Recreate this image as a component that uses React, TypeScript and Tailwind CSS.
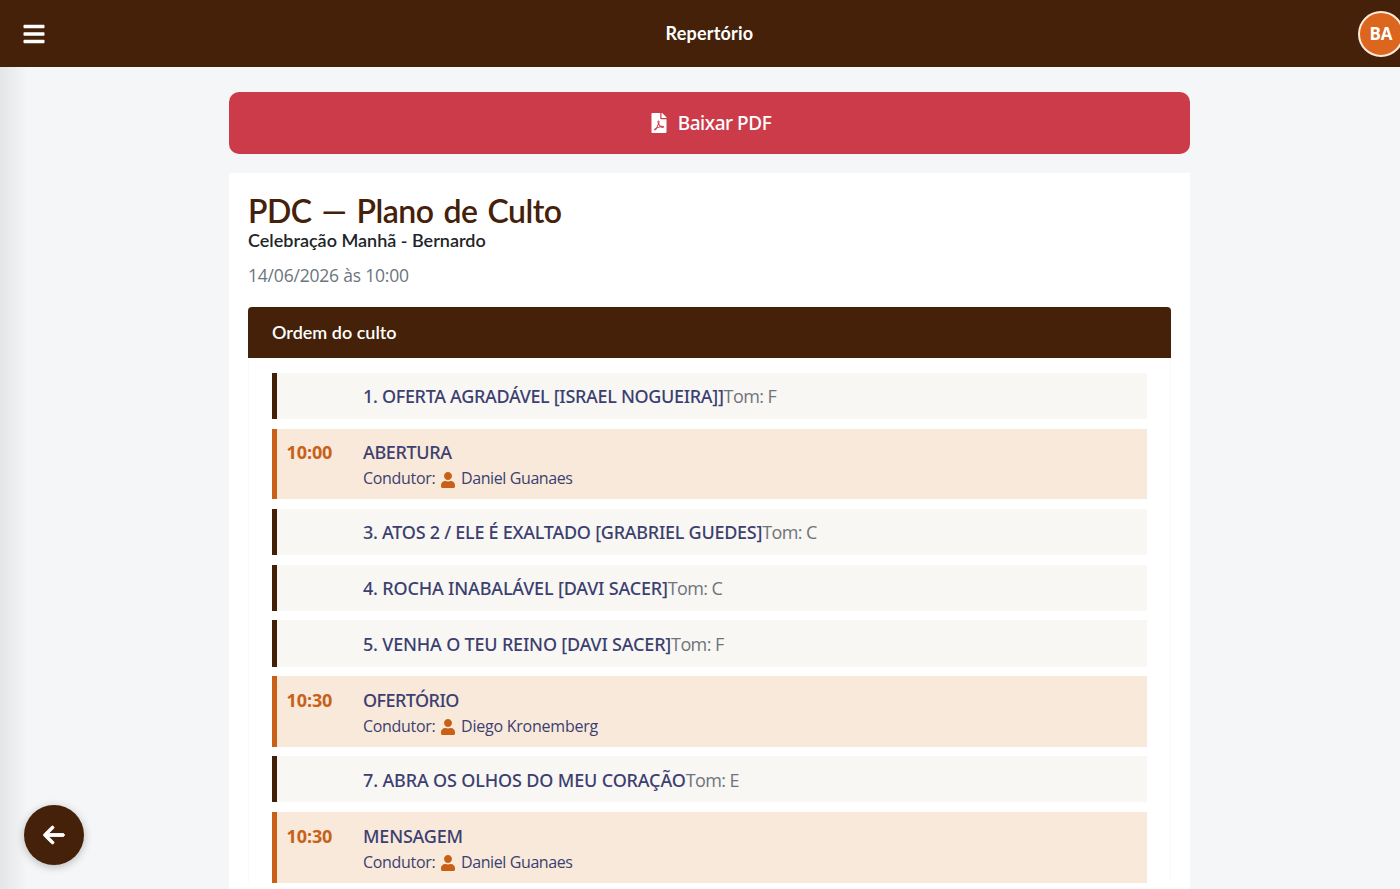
import cn from 'clsx';
import { FaBars, FaFilePdf, FaUser } from 'react-icons/fa';
import { FaArrowLeft } from 'react-icons/fa6';

type Item = {
  title: string;
  titleClass: string;
  time?: string;
  tom?: string;
  condutor?: string;
  condutorClass?: string;
};

const items: Item[] = [
  { title: '1. OFERTA AGRADÁVEL [ISRAEL NOGUEIRA]]', titleClass: 'tracking-[-0.32px]', tom: 'F' },
  { title: 'ABERTURA', titleClass: 'tracking-[-0.35px]', time: '10:00', condutor: 'Daniel Guanaes', condutorClass: 'tracking-[-0.4px]' },
  { title: '3. ATOS 2 / ELE É EXALTADO [GRABRIEL GUEDES]', titleClass: 'tracking-[-0.26px]', tom: 'C' },
  { title: '4. ROCHA INABALÁVEL [DAVI SACER]', titleClass: 'tracking-[-0.18px]', tom: 'C' },
  { title: '5. VENHA O TEU REINO [DAVI SACER]', titleClass: 'tracking-[-0.19px]', tom: 'F' },
  { title: 'OFERTÓRIO', titleClass: 'tracking-[-0.55px]', time: '10:30', condutor: 'Diego Kronemberg', condutorClass: 'tracking-[-0.23px]' },
  { title: '7. ABRA OS OLHOS DO MEU CORAÇÃO', titleClass: 'tracking-[-0.15px]', tom: 'E' },
  { title: 'MENSAGEM', titleClass: 'tracking-[-0.2px]', time: '10:30', condutor: 'Daniel Guanaes', condutorClass: 'tracking-[-0.4px]' },
];

function Row({ item }: { item: Item }) {
  return (
    <li
      className={cn(
        'flex w-full shrink-0 border-l-[5px] pl-[9.5px] whitespace-nowrap',
        item.time ? 'h-[70.6px] border-[#c86018] bg-[#f8e9db]' : 'h-[46.2px] border-[#431f07] bg-[#f8f7f4]'
      )}
    >
      <span className="w-[76.5px] shrink-0 pt-[9.5px] text-[18px] leading-[28px] font-bold tracking-[-0.1px] text-[#c86018]">
        {item.time}
      </span>
      <div className="pt-[9.5px] text-[#3c3f70]">
        <p className="flex text-[18px] leading-[28px]">
          <span className={cn("font-['Noto_Sans',sans-serif] font-medium", item.titleClass)}>{item.title}</span>
          {item.tom && <span className="tracking-[-0.6px] text-[#6f747a]">Tom: {item.tom}</span>}
        </p>
        {item.condutor && (
          <p className="flex items-center text-[16px] leading-[24px]">
            <span className="w-[77px] tracking-[-0.3px]">Condutor:</span>
            <FaUser className="mt-[3px] size-[16px] text-[#c86018]" />
            <span className={cn('ml-[5px]', item.condutorClass)}>{item.condutor}</span>
          </p>
        )}
      </div>
    </li>
  );
}

export default function App() {
  return (
    <div className="relative flex h-[889px] w-[1400px] flex-col overflow-hidden bg-[#f4f6f8] font-['Open_Sans',sans-serif]">
      <header className="z-10 flex h-[67px] shrink-0 items-center bg-[#442108] pl-[22px] text-white">
        <FaBars className="size-[24px]" />
        <h1 className="ml-[619.5px] font-['Lato',sans-serif] text-[18px] font-bold tracking-[0.2px]">Repertório</h1>
        <div className="absolute left-[1358px] flex size-[46px] items-center justify-center rounded-full border-2 border-[#fdebdc] bg-[#dc661d] text-[17px] font-bold">
          BA
        </div>
      </header>

      {/* sombra do menu lateral fechado */}
      <div className="absolute top-[67px] bottom-0 left-0 w-[28px] bg-linear-to-r from-black/7 to-transparent" />

      <main className="mt-[24.5px] ml-[228.5px] flex w-[961.5px] flex-col">
        <button className="flex h-[62px] shrink-0 items-center justify-center rounded-[10px] bg-[#cc3b49] text-[19px] font-medium text-white">
          <FaFilePdf className="mr-[8.5px] ml-[2px] size-[20px]" />
          <span className="pt-[2px] font-['Noto_Sans',sans-serif] tracking-[-0.45px]">Baixar PDF</span>
        </button>

        <section className="mt-[19.5px] flex h-[760px] flex-col bg-white px-[19.5px] pt-[19px]">
          <h2 className="font-['Lato',sans-serif] text-[32px] leading-[38px] font-semibold tracking-[-0.5px] text-[#442108] [word-spacing:2.5px]">
            PDC — Plano de Culto
          </h2>
          <h3 className="-mt-px font-['Lato',sans-serif] text-[18px] leading-[22px] font-semibold text-[#212529]">
            Celebração Manhã - Bernardo
          </h3>
          <p className="mt-[10px] text-[17.5px] leading-[28px] tracking-[-0.2px] text-[#6c757d]">14/06/2026 às 10:00</p>

          <div className="mt-[18.4px] rounded-t-[4px] border-x border-[#fafafa]">
            <div className="-mx-px flex h-[51px] items-center rounded-t-[4px] bg-[#442108] pl-6 font-['Lato',sans-serif] text-[18px] font-semibold text-white">
              Ordem do culto
            </div>
            <ul className="flex flex-col gap-[9.6px] pt-[14.4px] pr-[22.5px] pl-[23px]">
              {items.map((item, i) => (
                <Row key={i} item={item} />
              ))}
            </ul>
          </div>
        </section>
      </main>

      <button className="absolute top-[805px] left-[24px] flex size-[60px] items-center justify-center rounded-full bg-[#442108] text-white shadow-[0_2px_8px_rgba(0,0,0,0.25)]">
        <FaArrowLeft className="size-[24px] stroke-current [stroke-width:18]" />
      </button>
    </div>
  );
}
